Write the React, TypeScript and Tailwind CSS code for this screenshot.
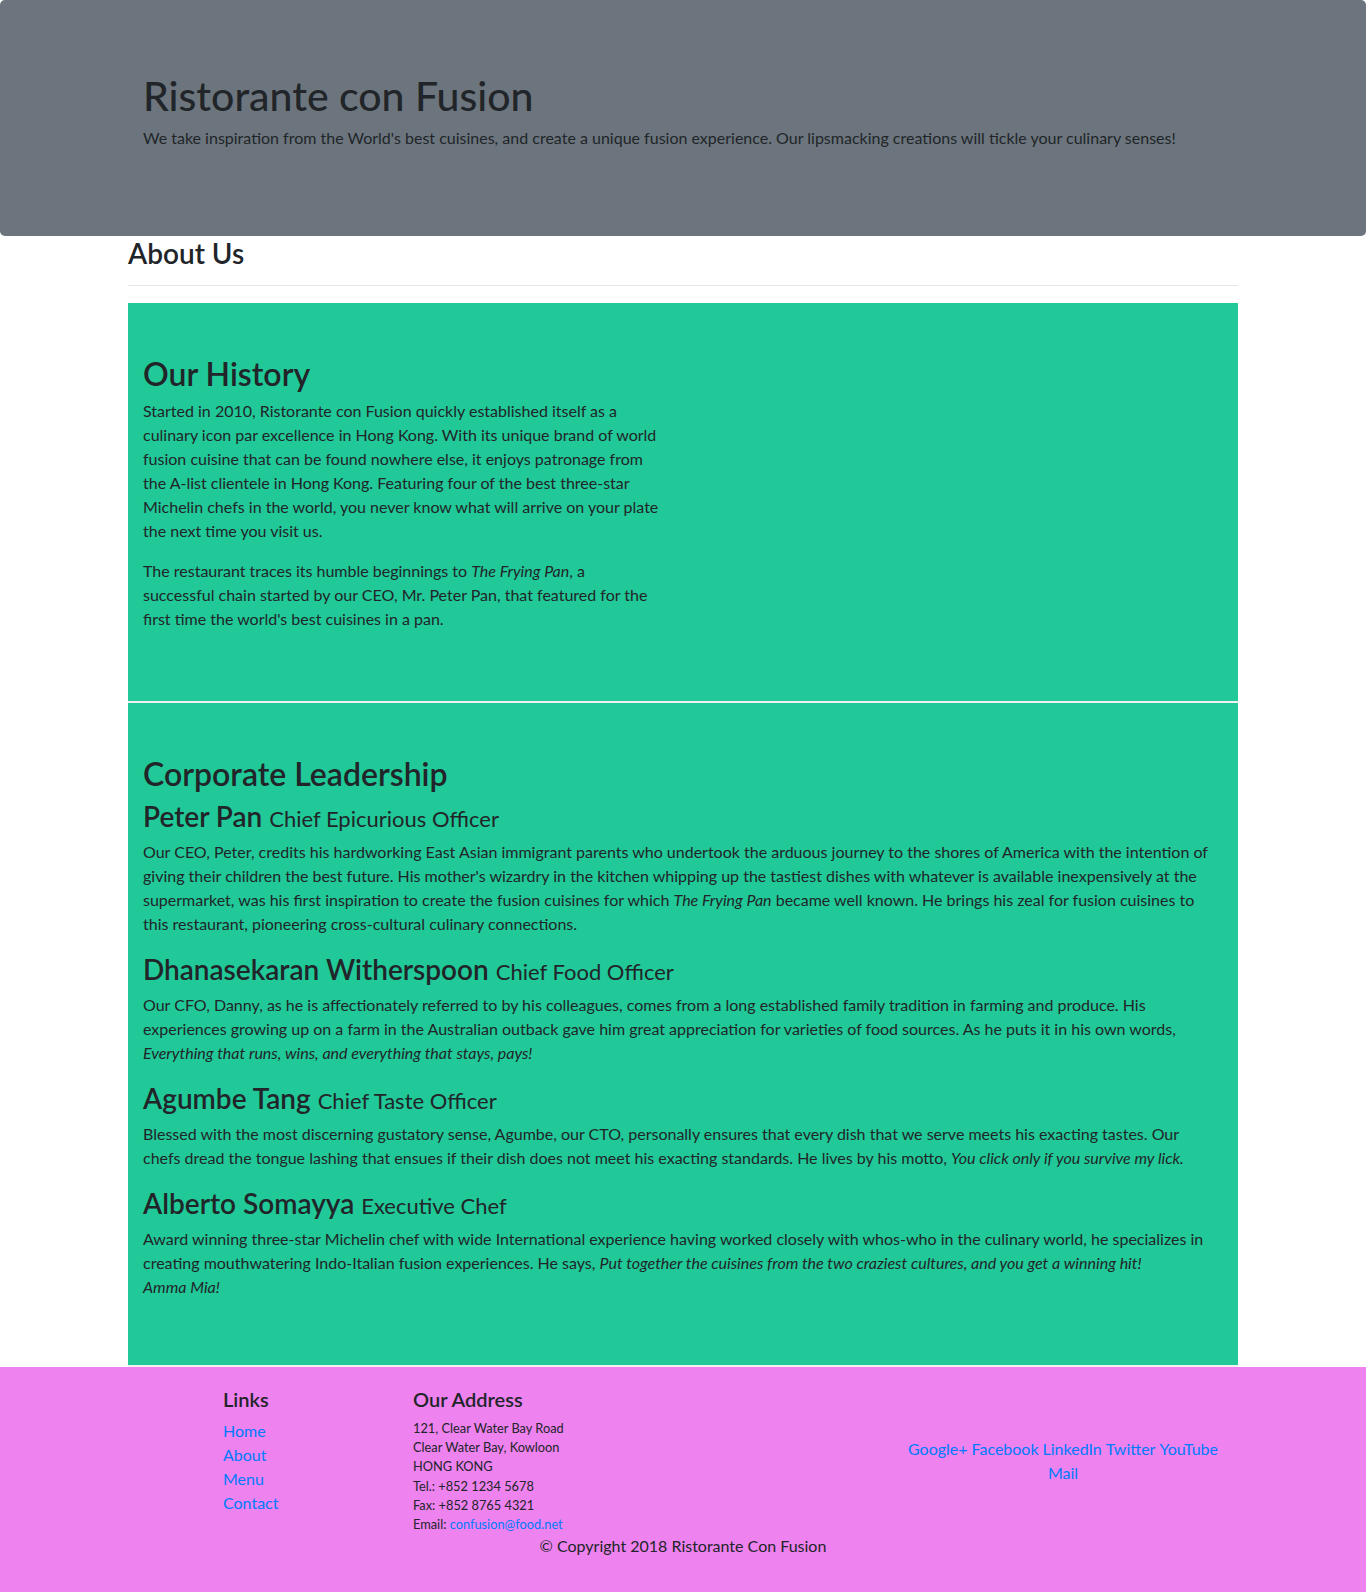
// Ristorante con Fusion - About page

const leaders = [
  {
    name: 'Peter Pan',
    title: 'Chief Epicurious Officer',
    body: (
      <>
        Our CEO, Peter, credits his hardworking East Asian immigrant parents who undertook the arduous journey to the
        shores of America with the intention of giving their children the best future. His mother's wizardry in the
        kitchen whipping up the tastiest dishes with whatever is available inexpensively at the supermarket, was his first
        inspiration to create the fusion cuisines for which <em>The Frying Pan</em> became well known. He brings his zeal
        for fusion cuisines to this restaurant, pioneering cross-cultural culinary connections.
      </>
    ),
  },
  {
    name: 'Dhanasekaran Witherspoon',
    title: 'Chief Food Officer',
    body: (
      <>
        Our CFO, Danny, as he is affectionately referred to by his colleagues, comes from a long established family
        tradition in farming and produce. His experiences growing up on a farm in the Australian outback gave him great
        appreciation for varieties of food sources. As he puts it in his own words,{' '}
        <em>Everything that runs, wins, and everything that stays, pays!</em>
      </>
    ),
  },
  {
    name: 'Agumbe Tang',
    title: 'Chief Taste Officer',
    body: (
      <>
        Blessed with the most discerning gustatory sense, Agumbe, our CTO, personally ensures that every dish that we
        serve meets his exacting tastes. Our chefs dread the tongue lashing that ensues if their dish does not meet his
        exacting standards. He lives by his motto, <em>You click only if you survive my lick.</em>
      </>
    ),
  },
  {
    name: 'Alberto Somayya',
    title: 'Executive Chef',
    body: (
      <>
        Award winning three-star Michelin chef with wide International experience having worked closely with whos-who in
        the culinary world, he specializes in creating mouthwatering Indo-Italian fusion experiences. He says,{' '}
        <em>Put together the cuisines from the two craziest cultures, and you get a winning hit! Amma{'\u00a0'}Mia!</em>
      </>
    ),
  },
];

export default function App() {
  return (
    <div className="min-h-[1592px] bg-white text-[#212529] font-['Lato',sans-serif] text-base leading-6">
      {/* Jumbotron */}
      <header className="h-[236px] rounded-[5px] bg-[#6c757d] pl-[143px] pt-[72px]">
        <h1 className="mb-[6px] text-[41px] leading-[48px] font-medium">Ristorante con Fusion</h1>
        <p>
          We take inspiration from the World's best cuisines, and create a unique fusion experience. Our lipsmacking
          creations will tickle your culinary senses!
        </p>
      </header>

      <main className="mx-auto w-[1140px] px-[15px]">
        <h3 className="text-[28px] leading-[34px] font-semibold">About Us</h3>
        <hr className="mt-[15px] border-t border-black/10" />

        {/* Our History */}
        <section className="mt-[17px] min-h-[400px] border-b-2 border-[#f1f1f1] bg-[#20c997] pl-[15px] pr-[25px] pt-[52px] pb-[50px]">
          <div className="w-[516px]">
            <h2 className="mb-[6px] text-[32px] leading-[38px] font-semibold">Our History</h2>
            <p className="mb-4">
              Started in 2010, Ristorante con Fusion quickly established itself as a culinary icon par excellence in Hong
              Kong. With its unique brand of world fusion cuisine that can be found nowhere else, it enjoys patronage from
              the A-list clientele in Hong Kong. Featuring four of the best three-star Michelin chefs in the world, you
              never know what will arrive on your plate the next time you visit us.
            </p>
            <p className="mb-4">
              The restaurant traces its humble beginnings to <em>The Frying Pan</em>, a successful chain started by our
              CEO, Mr. Peter Pan, that featured for the first time the world's best cuisines in a pan.
            </p>
          </div>
        </section>

        {/* Corporate Leadership */}
        <section className="border-b-2 border-[#f1f1f1] bg-[#20c997] pl-[15px] pr-[25px] pt-[52px] pb-[50px]">
          <h2 className="mb-[6px] text-[32px] leading-[38px] font-semibold">Corporate Leadership</h2>
          {leaders.map((l) => (
            <div key={l.name}>
              <h3 className="mb-[4px] text-[28px] leading-[34px] font-semibold">
                {l.name} <small className="text-[22px] font-normal">{l.title}</small>
              </h3>
              <p className="mb-4">{l.body}</p>
            </div>
          ))}
        </section>
      </main>

      {/* Footer */}
      <footer className="bg-[#ee82ee] py-5">
        <div className="mx-auto grid w-[1140px] grid-cols-12">
          <div className="col-span-2 col-start-2 px-[15px]">
            <h5 className="mb-2 text-xl leading-6 font-semibold">Links</h5>
            <ul className="mb-4">
              {['Home', 'About', 'Menu', 'Contact'].map((x) => (
                <li key={x}>
                  <a className="text-[#007bff]">{x}</a>
                </li>
              ))}
            </ul>
          </div>
          <div className="col-span-5 px-[15px]">
            <h5 className="mb-2 text-xl leading-6 font-semibold">Our Address</h5>
            <address className="text-[12.8px] leading-[19.2px] not-italic">
              121, Clear Water Bay Road
              <br />
              Clear Water Bay, Kowloon
              <br />
              HONG KONG
              <br />
              Tel.: +852 1234 5678
              <br />
              Fax: +852 8765 4321
              <br />
              Email: <a className="text-[#007bff]">confusion@food.net</a>
            </address>
          </div>
          <div className="col-span-4 self-center px-[15px] text-center text-[#007bff]">
            <div className="flex justify-center gap-[4px]">
              <a>Google+</a>
              <a>Facebook</a>
              <a>LinkedIn</a>
              <a>Twitter</a>
              <a>YouTube</a>
            </div>
            <a>Mail</a>
          </div>
        </div>
        <p className="mb-4 text-center">© Copyright 2018 Ristorante Con Fusion</p>
      </footer>
    </div>
  );
}
